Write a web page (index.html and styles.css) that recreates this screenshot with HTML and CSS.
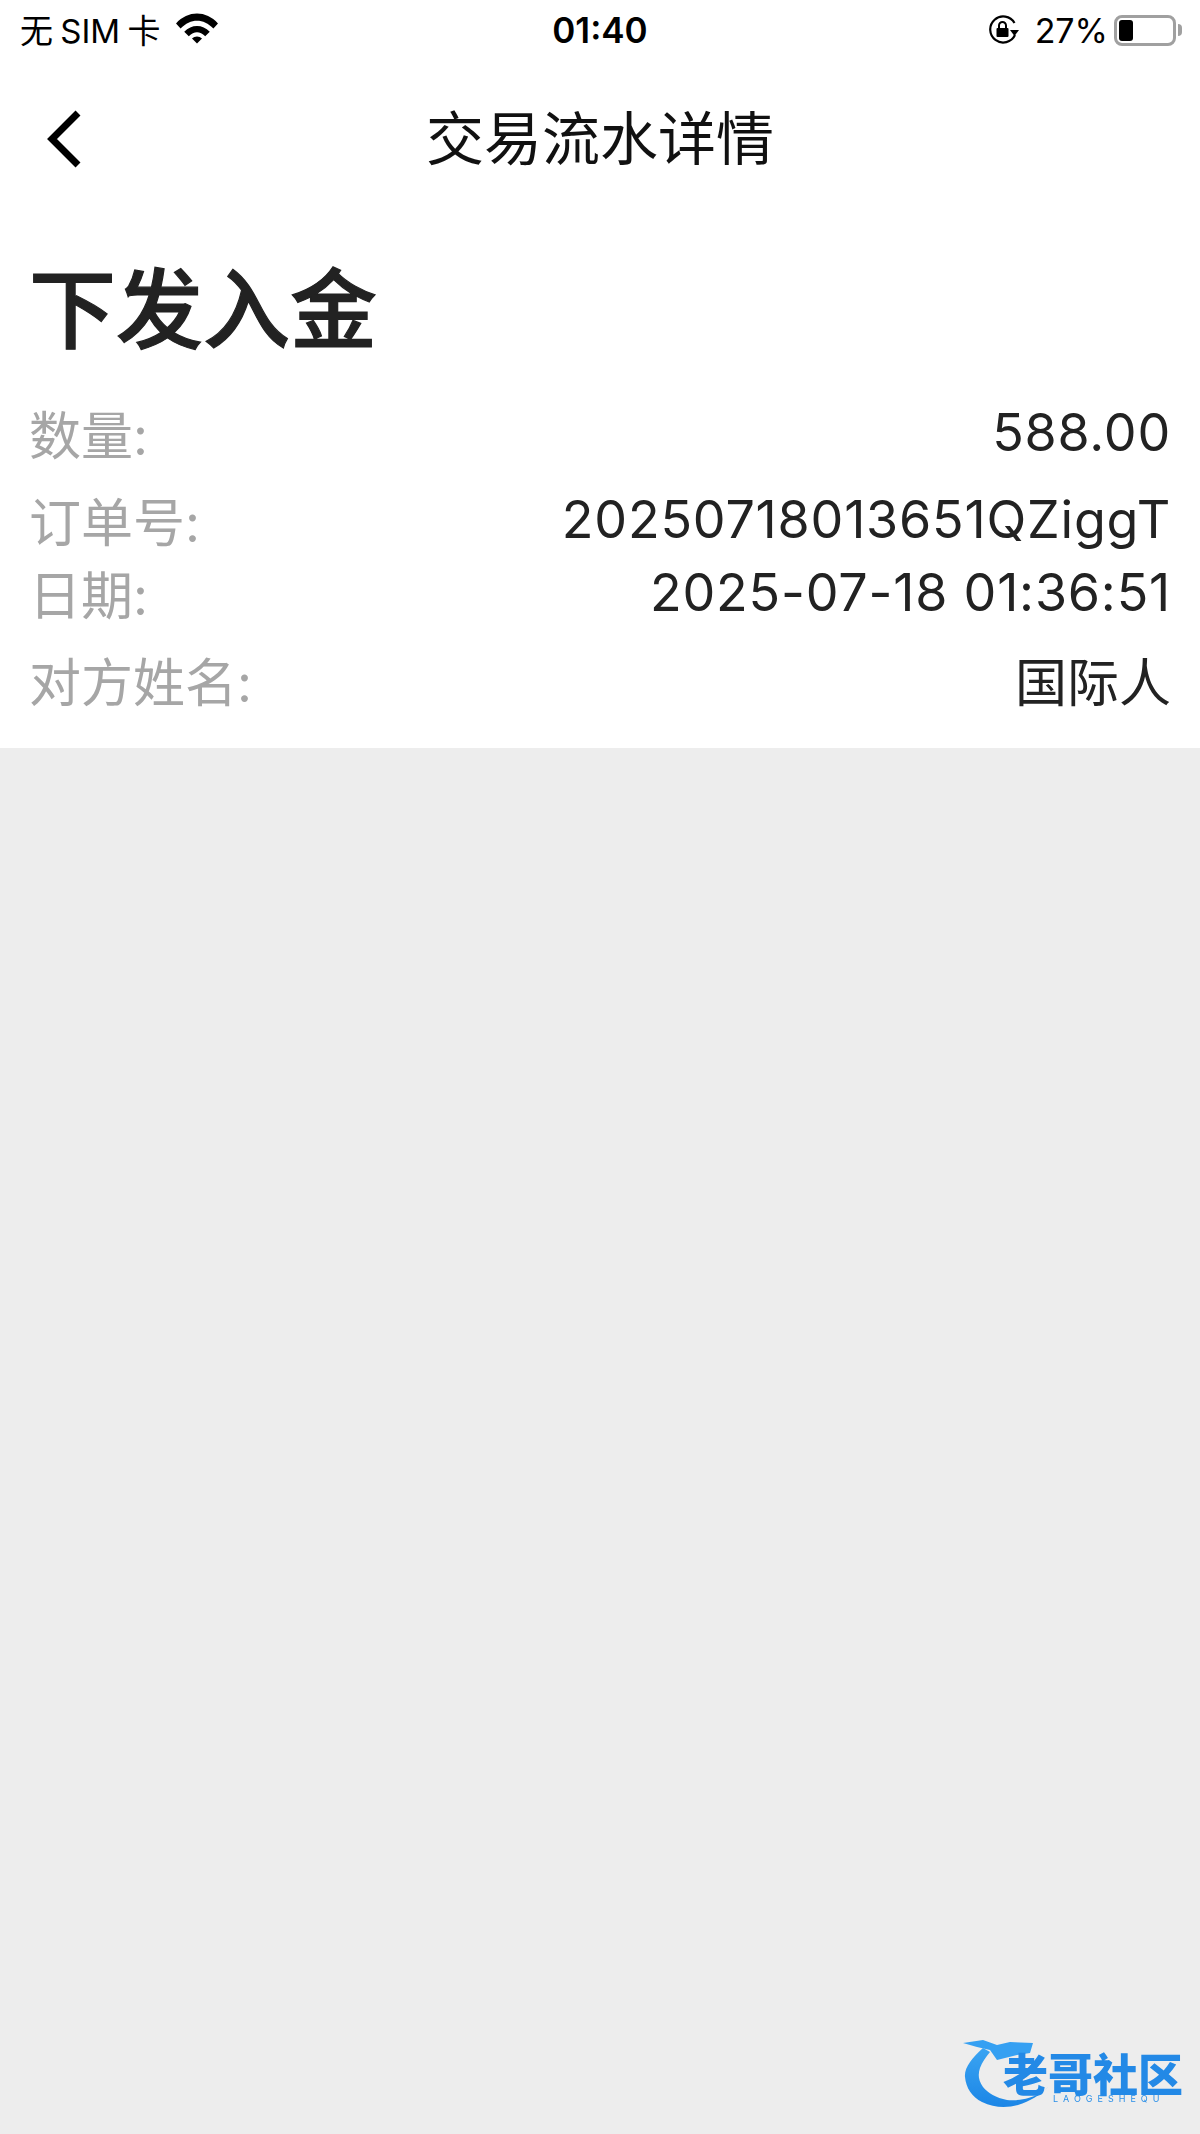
FILE: index.html
```html
<!DOCTYPE html>
<html>
    <head>
        <meta charset="UTF-8">
        <link rel="stylesheet" href="styles.css">
        <title>交易流水详情</title>
    </head>
    <body>
        <div class="page">
            <div class="status_bar">
                <div class="status_left">
                    <span class="sim_text">无 SIM 卡</span>
                    <svg class="wifi_icon" width="44" height="31" viewBox="0 0 46 34">
                        <path d="M0 11.5 C13 -3 33 -3 46 11.5 L41 17 C30 5.500 16 5.500 5 17 Z" fill="#000"/>
                        <path d="M9 20.500 C17 12 29 12 37 20.500 L32 25.500 C26 19.500 20 19.500 14 25.500 Z" fill="#000"/>
                        <path d="M17.500 28 C20.500 25 25.500 25 28.500 28 L23 33.500 Z" fill="#000"/>
                    </svg>
                </div>
                <div class="status_time">01:40</div>
                <div class="status_right">
                    <svg class="lock_icon" width="32" height="30" viewBox="0 0 32 30">
                        <path d="M26.500 8 A13 13 0 1 0 27 20" fill="none" stroke="#000" stroke-width="2.200"/>
                        <path d="M22 15 L31 15 L26.500 21 Z" fill="#000"/>
                        <rect x="8.500" y="13" width="12" height="9" rx="1" fill="#000"/>
                        <path d="M11 13 V10.500 A3.500 3.500 0 0 1 18 10.500 V13" fill="none" stroke="#000" stroke-width="2"/>
                    </svg>
                    <span class="battery_text">27%</span>
                    <div class="battery">
                        <div class="battery_body"><div class="battery_fill"></div></div>
                        <div class="battery_tip"></div>
                    </div>
                </div>
            </div>
            <div class="nav_bar">
                <svg class="back_icon" width="40" height="60" viewBox="0 0 40 60">
                    <path d="M35 4 L9 30 L35 56" fill="none" stroke="#000" stroke-width="7"/>
                </svg>
                <div class="nav_title">交易流水详情</div>
            </div>
            <div class="detail">
                <h1 class="detail_title">下发入金</h1>
                <div class="row row_first"><span class="label">数量:</span><span class="value value_num">588.00</span></div>
                <div class="row row_gap"><span class="label">订单号:</span><span class="value value_num">20250718013651QZiggT</span></div>
                <div class="row"><span class="label">日期:</span><span class="value value_num">2025-07-18 01:36:51</span></div>
                <div class="row row_gap"><span class="label">对方姓名:</span><span class="value value_name">国际人</span></div>
            </div>
            <div class="rest"></div>
        </div>
        <div class="watermark">
            <svg width="230" height="84" viewBox="0 0 230 84">
                <defs>
                    <linearGradient id="blue_grad" x1="0" y1="0" x2="0" y2="1">
                        <stop offset="0" stop-color="#3aa4f2"/>
                        <stop offset="1" stop-color="#1c86e6"/>
                    </linearGradient>
                </defs>
                <path d="M23 10 C12 20 4 30 5 39 C6 50 12 59 22 64 C34 70 47 70 58 67 C70 63 80 57 87 50 L88 49 C84 53 80 56 77 57 C68 61 56 63 47 62 C36 60 28 55 23 49 C18 42 18 36 20 30 C22 24 26 19 30 14 Z" fill="url(#blue_grad)"/>
                <path d="M3 5 L23 2 L37 7 L50 4 L73 5 L70 15 L57 17 L37 22 L30 12 L17 9 Z" fill="#35a0f2"/>
            </svg>
            <div class="wm_name">老哥社区</div>
            <div class="wm_sub">LAOGESHEQU</div>
        </div>
    </body>
</html>
```

FILE: styles.css
```css
html,body{
    margin:0;
    padding:0;
    height:100%;
    width:100%;
    background-color:#ededed;
}
body{
    position:relative;
    font-family:"Inter","Noto Sans CJK SC",sans-serif;
    overflow:hidden;
}
.page{
    display:flex;
    flex-direction:column;
    height:2134px;
}
.status_bar{
    height:60px;
    background-color:#fff;
    display:flex;
    align-items:center;
    justify-content:space-between;
    padding:0 18px 0 20px;
    position:relative;
    font-size:33px;
    color:#000;
}
.status_left{
    display:flex;
    align-items:center;
    gap:15px;
}
.sim_text{
    word-spacing:-2px;
    margin-top:-2px;
}
.wifi_icon{
    margin-top:-3px;
}
.status_time{
    position:absolute;
    left:0;
    right:0;
    text-align:center;
    font-weight:600;
    font-size:35px;
}
.status_right{
    display:flex;
    align-items:center;
    gap:16px;
}
.lock_icon{
    display:block;
    margin-right:-1px;
}
.battery_text{
    font-size:34px;
}
.battery{
    display:flex;
    align-items:center;
    margin-left:-10px;
}
.battery_body{
    width:52px;
    height:21px;
    border:3px solid #a0a0a0;
    border-radius:8px;
    padding:2px;
}
.battery_fill{
    width:14px;
    height:21px;
    background-color:#000;
    border-radius:3px;
}
.battery_tip{
    width:4px;
    height:12px;
    margin-left:2px;
    background-color:#a0a0a0;
    border-radius:0 4px 4px 0;
}
.nav_bar{
    height:158px;
    background-color:#fff;
    display:flex;
    align-items:center;
    position:relative;
    padding-left:43px;
}
.nav_title{
    position:absolute;
    left:0;
    right:0;
    text-align:center;
    font-size:58px;
    line-height:66px;
    color:#111;
}
.detail{
    background-color:#fff;
    padding:43px 29px 0 29px;
    height:487px;
}
.detail_title{
    margin:0;
    font-size:87px;
    line-height:100px;
    font-weight:500;
    -webkit-text-stroke:1.2px #222;
    color:#222;
}
.row{
    display:flex;
    justify-content:space-between;
    align-items:flex-start;
    height:73px;
    line-height:73px;
    font-size:52px;
}
.row_first{
    margin-top:36px;
}
.row_gap{
    margin-top:14px;
}
.label{
    color:#a6a6a6;
    margin-top:3px;
}
.value{
    color:#222;
}
.value_num{
    letter-spacing:.8px;
    margin-top:-1px;
}
.value_name{
    margin-top:3px;
}
.rest{
    flex:1;
    background-color:#ededed;
}
.watermark{
    position:absolute;
    left:960px;
    top:2038px;
    width:230px;
    height:84px;
    filter:blur(0.6px);
}
.watermark svg{
    display:block;
}
.wm_name{
    position:absolute;
    left:43px;
    top:23px;
    font-size:45px;
    line-height:30px;
    font-weight:900;
    white-space:nowrap;
    color:#2389e6;
}
.wm_sub{
    position:absolute;
    left:93px;
    top:56px;
    font-size:9px;
    line-height:10px;
    letter-spacing:5px;
    color:#2a8fe8;
    white-space:nowrap;
}
```
